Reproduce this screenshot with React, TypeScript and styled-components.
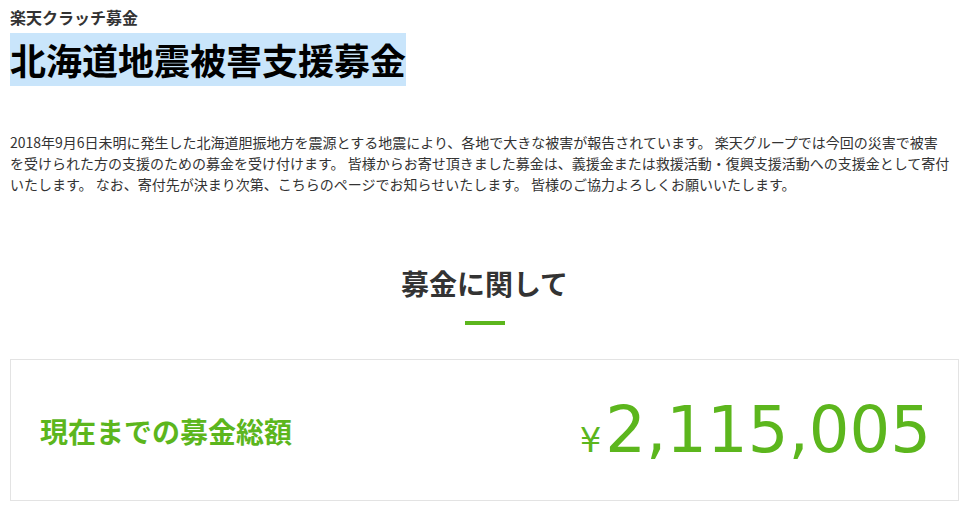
import styled, { createGlobalStyle } from "styled-components";

const GlobalStyle = createGlobalStyle`
  body {
    margin: 0;
    background: #fff;
    font-family: "Noto Sans CJK JP", "Noto Sans", sans-serif;
    color: #333;
  }
`;

const App = () => {
  return (
    <Page>
      <GlobalStyle />
      <Header>
        <Kicker>楽天クラッチ募金</Kicker>
        <Title>北海道地震被害支援募金</Title>
      </Header>

      <Lead>
        2018年9月6日未明に発生した北海道胆振地方を震源とする地震により、各地で大きな被害が報告されています。
        楽天グループでは今回の災害で被害
        <br />
        を受けられた方の支援のための募金を受け付けます。
        皆様からお寄せ頂きました募金は、義援金または救援活動・復興支援活動への支援金として寄付
        <br />
        いたします。 なお、寄付先が決まり次第、こちらのページでお知らせいたします。
        皆様のご協力よろしくお願いいたします。
      </Lead>

      <Section>
        <SectionTitle>募金に関して</SectionTitle>
        <Rule />
        <TotalCard>
          <TotalLabel>現在までの募金総額</TotalLabel>
          <Amount>
            <Yen>¥</Yen>
            <Digits>2,115,005</Digits>
          </Amount>
        </TotalCard>
      </Section>
    </Page>
  );
};

export default App;

const Page = styled.div`
  padding: 7px 0 20px 10px;
`;

const Header = styled.div`
  display: flex;
  flex-direction: column;
  align-items: flex-start;
`;

const Kicker = styled.div`
  font-size: 16px;
  line-height: 20px;
  font-weight: 700;
  color: #333;
  margin-bottom: 6px;
`;

const Title = styled.h1`
  margin: 0;
  display: inline-block;
  background: #c9e5fb;
  color: #000;
  font-size: 36px;
  font-weight: 700;
  line-height: 53px;
`;

const Lead = styled.p`
  margin: 46px 0 0;
  padding-right: 8px;
  font-size: 14px;
  line-height: 21px;
  color: #333;
`;

const Section = styled.div`
  display: flex;
  flex-direction: column;
  align-items: center;
  margin: 68px 16px 0 0;
`;

const SectionTitle = styled.h2`
  margin: 0;
  font-size: 28px;
  line-height: 40px;
  font-weight: 700;
  color: #333;
`;

const Rule = styled.div`
  width: 40px;
  height: 4px;
  background: #5cb61d;
  margin-top: 18px;
`;

const TotalCard = styled.div`
  align-self: stretch;
  margin-top: 34px;
  height: 142px;
  box-sizing: border-box;
  border: 1px solid #e3e3e3;
  display: flex;
  align-items: center;
  justify-content: space-between;
  padding: 0 27px 0 29px;
`;

const TotalLabel = styled.div`
  font-size: 28px;
  font-weight: 700;
  color: #5cb61d;
  margin-top: 2px;
`;

const Amount = styled.div`
  display: flex;
  align-items: baseline;
  color: #5cb61d;
  font-family: "DejaVu Sans", Verdana, sans-serif;
`;

const Yen = styled.span`
  font-size: 34px;
  margin-right: 4px;
`;

const Digits = styled.span`
  font-size: 64px;
  line-height: 1;
`;
